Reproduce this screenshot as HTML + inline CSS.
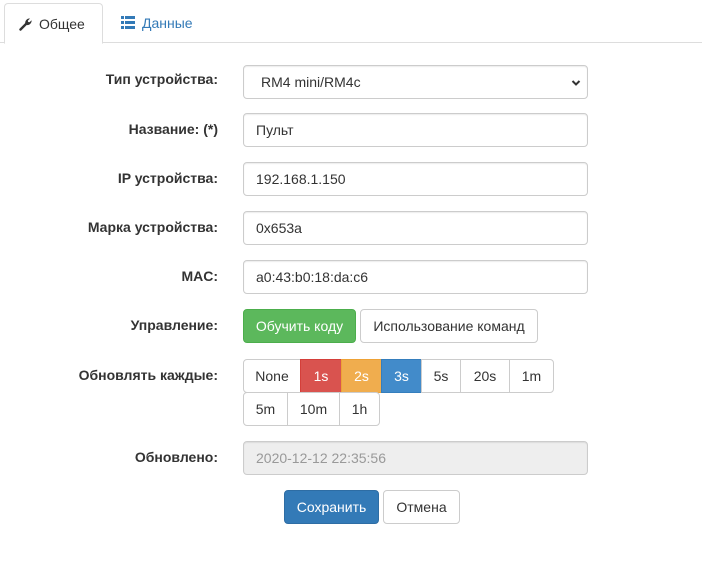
<!DOCTYPE html>
<html><head><meta charset="utf-8"><style>
body{margin:0;width:702px;height:562px;background:#fff;font-family:"Liberation Sans",sans-serif;font-size:14px;color:#333;position:relative;overflow:hidden}
.a{position:absolute;box-sizing:border-box}
.line{left:0;top:42px;width:702px;height:1px;background:#ddd}
.tab1{left:4px;top:3px;width:99px;height:41px;border:1px solid #ddd;border-bottom:1px solid #fff;border-radius:4px 4px 0 0;background:#fff;padding:12px 0 0 14px}
.tab2{left:121px;top:15px;color:#337ab7}
.lbl{right:484px;font-weight:bold;text-align:right;white-space:nowrap}
.in{left:243px;width:345px;height:34px;border:1px solid #ccc;border-radius:4px;padding:8px 12px 0;box-shadow:inset 0 1px 1px rgba(0,0,0,.075)}
.b{height:34px;border:1px solid #ccc;text-align:center;padding-top:8px;background:#fff}
</style></head><body>
<div class="a line"></div>
<div class="a tab1"><svg width="14" height="14" viewBox="0 0 14 14" style="vertical-align:-2px;margin-right:6px"><path d="M1.5 12.5 L7.5 6.5" stroke="#333" stroke-width="2.4" stroke-linecap="round"/><path d="M6.5 7.5 C5.5 5 7 2 10 1.5 L11 1.5 L8.8 3.7 L9.2 5 L10.5 5.3 L12.6 3.2 C12.8 6 10.5 8.5 7.5 8Z" fill="#333"/></svg>Общее</div>
<div class="a tab2"><svg width="14" height="13" viewBox="0 0 14 13" style="vertical-align:-1px;margin-right:7px" fill="#337ab7"><rect x="0" y="0" width="3" height="3"/><rect x="4" y="0" width="10" height="3"/><rect x="0" y="5" width="3" height="3"/><rect x="4" y="5" width="10" height="3"/><rect x="0" y="10" width="3" height="3"/><rect x="4" y="10" width="10" height="3"/></svg>Данные</div>

<div class="a lbl" style="top:71px">Тип устройства:</div>
<div class="a in" style="top:65px;padding-left:17px">RM4 mini/RM4c<svg class="a" style="right:6px;top:13px" width="10" height="8" viewBox="0 0 10 8"><path d="M1.5 2 L5 5.5 L8.5 2" stroke="#333" stroke-width="2" fill="none"/></svg></div>
<div class="a lbl" style="top:121px">Название: (*)</div>
<div class="a in" style="top:113px">Пульт</div>
<div class="a lbl" style="top:170px">IP устройства:</div>
<div class="a in" style="top:162px">192.168.1.150</div>
<div class="a lbl" style="top:219px">Марка устройства:</div>
<div class="a in" style="top:211px">0x653a</div>
<div class="a lbl" style="top:268px">MAC:</div>
<div class="a in" style="top:260px">a0:43:b0:18:da:c6</div>

<div class="a lbl" style="top:317px">Управление:</div>
<div class="a b" style="left:243px;top:309px;width:113px;background:#5cb85c;border-color:#4cae4c;color:#fff;border-radius:4px">Обучить коду</div>
<div class="a b" style="left:360px;top:309px;width:178px;border-radius:4px">Использование команд</div>

<div class="a lbl" style="top:367px">Обновлять каждые:</div>
<div class="a b" style="left:243px;top:359px;width:58px;border-radius:4px 0 0 4px">None</div>
<div class="a b" style="left:300px;top:359px;width:42px;background:#d9534f;border-color:#d43f3a;color:#fff">1s</div>
<div class="a b" style="left:341px;top:359px;width:41px;background:#f0ad4e;border-color:#eea236;color:#fff">2s</div>
<div class="a b" style="left:381px;top:359px;width:41px;background:#428bca;border-color:#357ebd;color:#fff">3s</div>
<div class="a b" style="left:421px;top:359px;width:40px">5s</div>
<div class="a b" style="left:460px;top:359px;width:50px">20s</div>
<div class="a b" style="left:509px;top:359px;width:45px;border-radius:0 4px 4px 0">1m</div>
<div class="a b" style="left:243px;top:392px;width:45px;border-radius:4px 0 0 4px">5m</div>
<div class="a b" style="left:287px;top:392px;width:53px">10m</div>
<div class="a b" style="left:339px;top:392px;width:41px;border-radius:0 4px 4px 0">1h</div>

<div class="a lbl" style="top:449px">Обновлено:</div>
<div class="a in" style="top:441px;background:#eee;color:#999">2020-12-12 22:35:56</div>

<div class="a b" style="left:284px;top:490px;width:95px;background:#337ab7;border-color:#2e6da4;color:#fff;border-radius:4px">Сохранить</div>
<div class="a b" style="left:383px;top:490px;width:77px;border-radius:4px">Отмена</div>
</body></html>
